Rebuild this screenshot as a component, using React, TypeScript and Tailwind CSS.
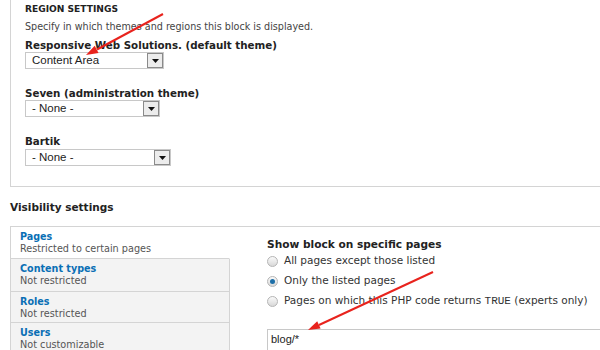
import React from "react";

function Select({ value, width }: { value: string; width: string }) {
  return (
    <div className={`flex h-[17px] border border-[#c8c8c8] bg-white ${width}`}>
      <div className="flex-1 pl-[6px] text-[11.5px] leading-[15px] text-[#222] font-['Liberation_Sans',sans-serif]">{value}</div>
      <div className="w-[16px] h-[15px] border border-[#8a8a8a] bg-[#ececec] flex items-center justify-center">
        <svg width="7" height="4" viewBox="0 0 7 4"><polygon points="0,0 7,0 3.5,4" fill="#111" /></svg>
      </div>
    </div>
  );
}

function Radio({ checked }: { checked?: boolean }) {
  return (
    <div className="w-[11px] h-[11px] shrink-0 rounded-full border border-[#b5b5b5] bg-gradient-to-b from-[#fafafa] to-[#d8d8d8] flex items-center justify-center">
      {checked && <div className="w-[5px] h-[5px] rounded-full bg-[#1d6fa8]" />}
    </div>
  );
}

const tabs = [
  { t: "Pages", d: "Restricted to certain pages", h: "h-[32px]", sel: true },
  { t: "Content types", d: "Not restricted", h: "h-[33px]" },
  { t: "Roles", d: "Not restricted", h: "h-[31px]" },
  { t: "Users", d: "Not customizable", h: "h-[40px]" },
];

export default function App() {
  return (
    <div className="relative w-[600px] h-[350px] overflow-hidden bg-white text-[#333] font-['DejaVu_Sans',sans-serif]">
      <div className="ml-[10px] w-[620px] border-l border-b border-[#d4d4d4] pl-[14px] pb-[20px]">
        <div className="h-[18px] leading-[18px] text-[9.1px] font-bold text-[#222]">REGION SETTINGS</div>
        <div className="h-[18px] leading-[18px] text-[9.6px] text-[#444]">Specify in which themes and regions this block is displayed.</div>
        <div className="mt-[2px] h-[14px] leading-[14px] text-[10.3px] font-bold text-[#222]">Responsive Web Solutions. (default theme)</div>
        <Select value="Content Area" width="w-[139px]" />
        <div className="mt-[17px] h-[14px] leading-[14px] text-[10.3px] font-bold text-[#222]">Seven (administration theme)</div>
        <Select value="- None -" width="w-[135px]" />
        <div className="mt-[17px] h-[14px] leading-[14px] text-[10.3px] font-bold text-[#222]">Bartik</div>
        <div className="mt-[1px]">
          <Select value="- None -" width="w-[146px]" />
        </div>
      </div>
      <div className="ml-[10px] mt-[12px] h-[16px] leading-[16px] text-[10.5px] font-bold text-[#222]">Visibility settings</div>
      <div className="ml-[10px] mt-[11px] w-[620px] h-[200px] border-l border-t border-[#d4d4d4] flex">
        <div className="w-[219px] shrink-0 flex flex-col">
          {tabs.map((tab) => (
            <div
              key={tab.t}
              className={`${tab.h} pl-[9px] pt-[4px] border-b border-[#d4d4d4] ${tab.sel ? "bg-white border-r border-r-white" : "bg-[#f3f3f3] border-r"}`}
            >
              <div className="h-[12px] leading-[12px] text-[9.6px] font-bold text-[#0a6fb5]">{tab.t}</div>
              <div className="h-[11px] leading-[11px] text-[9.7px] text-[#555]">{tab.d}</div>
            </div>
          ))}
        </div>
        <div className="flex-1 pl-[37px] pt-[10px]">
          <div className="h-[14px] leading-[14px] text-[10.6px] font-bold text-[#222] whitespace-nowrap">Show block on specific pages</div>
          {[
            { l: <>All pages except those listed</> },
            { l: <>Only the listed pages</>, c: true },
            {
              l: (
                <>
                  Pages on which this PHP code returns <span className="font-['Liberation_Mono',monospace] text-[11px]">TRUE</span> (experts only)
                </>
              ),
            },
          ].map((r, i) => (
            <div key={i} className="h-[20px] flex items-center gap-[6px]">
              <Radio checked={r.c} />
              <div className="text-[10.5px] text-[#333] whitespace-nowrap">{r.l}</div>
            </div>
          ))}
          <div className="mt-[18px] w-[400px] h-[60px] border border-[#c8c8c8] pl-[3px] pt-[3px] text-[11px] leading-[13px] text-[#222] font-['Liberation_Sans',sans-serif]">blog/*</div>
        </div>
      </div>
      <svg className="absolute left-0 top-0 pointer-events-none" width="600" height="350">
        <line x1="163" y1="14" x2="97" y2="49.5" stroke="#e8231d" strokeWidth="2" />
        <polygon points="86,55 94.7,45.8 98.5,52.9" fill="#e8231d" />
        <line x1="433" y1="272" x2="319" y2="325" stroke="#e8231d" strokeWidth="2" />
        <polygon points="308,330 317.2,321.3 320.6,328.6" fill="#e8231d" />
      </svg>
    </div>
  );
}
